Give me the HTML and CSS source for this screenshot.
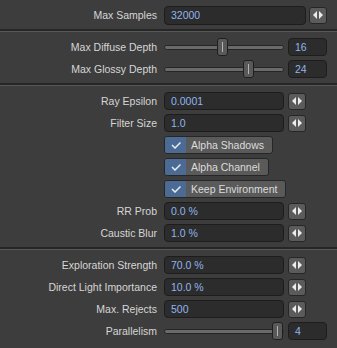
FILE: index.html
```html
<!DOCTYPE html>
<html lang="en">
<head>
    <meta charset="UTF-8">
    <title>Render Settings</title>
    <link rel="stylesheet" href="styles.css">
</head>
<body>
    <div class="panel">
        <div class="section">
            <div class="row">
                <span class="label">Max Samples</span>
                <span class="field wide">32000</span>
                <span class="stepper first"><svg width="10" height="8" viewBox="0 0 10 8"><polygon points="4,0 0,4 4,8"/><polygon points="6,0 10,4 6,8"/></svg></span>
            </div>
        </div>
        <div class="sep"></div>
        <div class="section">
            <div class="row">
                <span class="label">Max Diffuse Depth</span>
                <span class="slider"><span class="track"></span><span class="knob" style="left: 53px"></span></span>
                <span class="field num">16</span>
            </div>
            <div class="row">
                <span class="label">Max Glossy Depth</span>
                <span class="slider"><span class="track"></span><span class="knob" style="left: 79px"></span></span>
                <span class="field num">24</span>
            </div>
        </div>
        <div class="sep"></div>
        <div class="section">
            <div class="row">
                <span class="label">Ray Epsilon</span>
                <span class="field">0.0001</span>
                <span class="stepper"><svg width="10" height="8" viewBox="0 0 10 8"><polygon points="4,0 0,4 4,8"/><polygon points="6,0 10,4 6,8"/></svg></span>
            </div>
            <div class="row">
                <span class="label">Filter Size</span>
                <span class="field">1.0</span>
                <span class="stepper"><svg width="10" height="8" viewBox="0 0 10 8"><polygon points="4,0 0,4 4,8"/><polygon points="6,0 10,4 6,8"/></svg></span>
            </div>
            <div class="row">
                <span class="label"></span>
                <span class="check"><span class="box"><svg width="10" height="8" viewBox="0 0 10 8"><path d="M1 4 L4 7 L9.5 1.5"/></svg></span><span class="text">Alpha Shadows</span></span>
            </div>
            <div class="row">
                <span class="label"></span>
                <span class="check"><span class="box"><svg width="10" height="8" viewBox="0 0 10 8"><path d="M1 4 L4 7 L9.5 1.5"/></svg></span><span class="text">Alpha Channel</span></span>
            </div>
            <div class="row">
                <span class="label"></span>
                <span class="check"><span class="box"><svg width="10" height="8" viewBox="0 0 10 8"><path d="M1 4 L4 7 L9.5 1.5"/></svg></span><span class="text">Keep Environment</span></span>
            </div>
            <div class="row">
                <span class="label">RR Prob</span>
                <span class="field">0.0 %</span>
                <span class="stepper"><svg width="10" height="8" viewBox="0 0 10 8"><polygon points="4,0 0,4 4,8"/><polygon points="6,0 10,4 6,8"/></svg></span>
            </div>
            <div class="row">
                <span class="label">Caustic Blur</span>
                <span class="field">1.0 %</span>
                <span class="stepper"><svg width="10" height="8" viewBox="0 0 10 8"><polygon points="4,0 0,4 4,8"/><polygon points="6,0 10,4 6,8"/></svg></span>
            </div>
        </div>
        <div class="sep"></div>
        <div class="section">
            <div class="row">
                <span class="label">Exploration Strength</span>
                <span class="field">70.0 %</span>
                <span class="stepper"><svg width="10" height="8" viewBox="0 0 10 8"><polygon points="4,0 0,4 4,8"/><polygon points="6,0 10,4 6,8"/></svg></span>
            </div>
            <div class="row">
                <span class="label">Direct Light Importance</span>
                <span class="field">10.0 %</span>
                <span class="stepper"><svg width="10" height="8" viewBox="0 0 10 8"><polygon points="4,0 0,4 4,8"/><polygon points="6,0 10,4 6,8"/></svg></span>
            </div>
            <div class="row">
                <span class="label">Max. Rejects</span>
                <span class="field">500</span>
                <span class="stepper"><svg width="10" height="8" viewBox="0 0 10 8"><polygon points="4,0 0,4 4,8"/><polygon points="6,0 10,4 6,8"/></svg></span>
            </div>
            <div class="row">
                <span class="label">Parallelism</span>
                <span class="slider"><span class="track"></span><span class="knob" style="left: 108px"></span></span>
                <span class="field num">4</span>
            </div>
        </div>
    </div>
</body>
</html>
```
FILE: styles.css
```css
* {
    margin: 0;
    padding: 0;
    box-sizing: border-box;
}

body {
    background-color: #3d3d3d;
    color: #d6d6d6;
    font-family: "Liberation Sans", Arial, sans-serif;
    font-size: 10.5px;
}

.panel {
    width: 337px;
}

.section {
    display: flex;
    flex-direction: column;
    gap: 4px;
    padding: 6px 0 5px 0;
}

.sep {
    height: 3px;
    border-top: 2px solid #262626;
    border-bottom: 1px solid #575757;
}

.row {
    display: flex;
    align-items: center;
    height: 18px;
}

.label {
    width: 164px;
    padding-right: 7px;
    text-align: right;
    white-space: nowrap;
}

.field {
    width: 120px;
    height: 18px;
    line-height: 16px;
    padding-left: 6px;
    background-color: #2c2c2c;
    border: 1px solid #1d1d1d;
    border-radius: 4px;
    color: #8fb5ec;
}

.field.wide {
    width: 142px;
    height: 19px;
    line-height: 17px;
}

.field.num {
    width: 39px;
    margin-left: 4px;
}

.stepper {
    width: 18px;
    height: 17px;
    margin-left: 4px;
    display: flex;
    align-items: center;
    justify-content: center;
    background-color: #5b5b5b;
    border: 1px solid #262626;
    border-radius: 3px;
}

.stepper.first {
    margin-left: 3px;
}

.stepper svg {
    fill: #ececec;
}

.slider {
    position: relative;
    width: 120px;
    height: 18px;
    display: flex;
    align-items: center;
}

.track {
    width: 100%;
    height: 5px;
    background-color: #6a6a6a;
    border: 1px solid #252525;
    border-radius: 3px;
}

.knob {
    position: absolute;
    top: 0;
    width: 11px;
    height: 18px;
    background-color: #595959;
    border: 1px solid #1f1f1f;
    border-radius: 3px;
}

.knob::after {
    content: "";
    position: absolute;
    left: 4px;
    top: 3px;
    width: 1px;
    height: 10px;
    background-color: #b4b4b4;
}

.check {
    display: flex;
    height: 18px;
    background-color: #5a5a5a;
    border: 1px solid #262626;
    border-radius: 3px;
    overflow: hidden;
}

.box {
    width: 21px;
    display: flex;
    align-items: center;
    justify-content: center;
    background-color: #4b6b95;
}

.box svg path {
    fill: none;
    stroke: #e6edf5;
    stroke-width: 1.5;
}

.text {
    padding: 0 8px 0 5px;
    line-height: 16px;
    color: #dcdcdc;
}
```
